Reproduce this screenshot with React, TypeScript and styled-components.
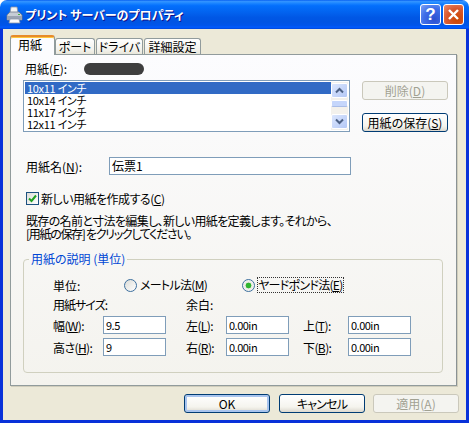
import React from "react";
import styled, { createGlobalStyle } from "styled-components";

const Global = createGlobalStyle`
  html, body { margin: 0; padding: 0; background: #fff; }
  body { font-family: "Noto Sans CJK JP", "Liberation Sans", sans-serif; font-size: 12px; color: #000; font-feature-settings: "palt"; }
  * { box-sizing: border-box; }
`;

const Win = styled.div`
  width: 469px; height: 423px; display: flex; flex-direction: column; overflow: hidden;
  border-radius: 7px 7px 0 0;
`;
const TitleBar = styled.div`
  height: 29px; flex: none; display: flex; align-items: center; padding: 0 5px 0 6px;
  background: linear-gradient(180deg, #0058ee 0%, #3593ff 4%, #288eff 8%, #127dff 14%, #036ffc 20%, #0262ee 44%, #0057e5 60%, #0054e3 76%, #0055eb 88%, #005bff 94%, #0046d8 100%);
`;
const Title = styled.div`
  color: #fff; font-weight: 700; font-size: 12px; line-height: 16px; margin-left: 2px; flex: 1;
  text-shadow: 1px 1px 0 #0f1089; white-space: pre;
`;
const CapBtn = styled.div<{ $danger?: boolean }>`
  width: 21px; height: 21px; margin-left: 2px; border: 1px solid #fff; border-radius: 3px;
  display: flex; align-items: center; justify-content: center; color: #fff;
  font: 700 17px/1 "Liberation Sans", sans-serif;
  background: ${p => p.$danger
    ? "radial-gradient(circle at 70% 75%, #cc4600 0%, #d8582f 55%, #ec8c6e 100%)"
    : "radial-gradient(circle at 70% 75%, #2b4fd0 0%, #3e6ee8 55%, #7fa3f5 100%)"};
`;
const Body = styled.div`
  flex: 1; display: flex; flex-direction: column; background: #ece9d8;
  border: solid #0831d9; border-width: 0 3px 3px;
  padding-top: 6px;
`;
const TabStrip = styled.div`
  display: flex; align-items: flex-end; height: 20px; margin: 0 0 -1px 7px; position: relative; z-index: 1;
`;
const Tab = styled.div<{ $active?: boolean; $w: number }>`
  width: ${p => p.$w}px; display: flex; align-items: center; white-space: nowrap;
  border: 1px solid #919b9c; border-radius: 3px 3px 0 0;
  ${p => p.$active ? `
    height: 20px; border-bottom: 0; border-top: 2px solid #e68b2c; background: #fcfcfe;
    padding: 0 0 3px 7px; box-shadow: inset 0 1px 0 #ffc73c;
  ` : `
    height: 16px; margin: 0 1px 1px 0; justify-content: center; border-bottom: 0;
    background: linear-gradient(180deg, #fff, #f3f2ec 70%, #e8e6da);
  `}
`;
const Panel = styled.div`
  margin-left: 7px; width: 447px; height: 332px; border: 1px solid #919b9c; border-right-color: #8a9294;
  box-shadow: 1px 1px 0 #d0cdbc;
  background: linear-gradient(180deg, #fcfcfe 0%, #f4f3ee 100%);
  padding: 7px 0 0 12px;
`;
const PaperHead = styled.div`
  display: flex; align-items: center; height: 14px; margin-bottom: 4px; padding-left: 2px; line-height: 14px;
`;
const Blob = styled.div`
  width: 60px; height: 12px; margin-left: 17px; border-radius: 6px; background: #3e3e3e; filter: blur(0.7px);
`;
const ListRow = styled.div`display: flex; align-items: flex-start; gap: 12px;`;
const List = styled.div`
  width: 327px; height: 52px; border: 1px solid #7f9db9; background: #fff; padding: 1px; display: flex;
`;
const Items = styled.div`flex: 1; padding-left: 0;`;
const Item = styled.div<{ $sel?: boolean }>`
  height: 12px; line-height: 12px; padding-left: 2px; white-space: pre; font-size: 11px; letter-spacing: -0.3px;
  ${p => p.$sel ? "background: #316ac5; color: #fff;" : ""}
`;
const Scroll = styled.div`
  width: 17px; display: flex; flex-direction: column; background: #f3f1ec; padding: 1px 0;
`;
const ScrollBtn = styled.div<{ $end?: boolean }>`
  height: 15px; margin: ${p => p.$end ? "auto 0 0" : "0"}; border: 1px solid #fff; border-radius: 2px;
  background: linear-gradient(135deg, #dbe6fd, #b4c8f6); display: flex; align-items: center; justify-content: center;
`;
const Thumb = styled.div`
  height: 7px; margin-top: 2px; border: 1px solid #fff; border-bottom-color: #a9bde8; border-radius: 2px; background: #c5d6fb;
`;
const SideButtons = styled.div`display: flex; flex-direction: column; gap: 13px; margin-top: 1px;`;
const Btn = styled.div<{ $disabled?: boolean; $focus?: boolean; $tight?: boolean }>`
  width: 86px; height: 19px; border-radius: 3px; display: flex; align-items: center; justify-content: center;
  white-space: nowrap; line-height: 14px;
  ${p => p.$tight ? "letter-spacing: -0.8px;" : ""}
  ${p => p.$disabled ? `
    border: 1px solid #cac8bb; background: #f4f4f0; color: #a1a192;
  ` : `
    border: 1px solid #003c74; background: linear-gradient(180deg, #fff 0%, #f5f4ee 70%, #dcd8ce 100%); color: #000;
  `}
  ${p => p.$focus ? "box-shadow: inset 0 0 0 2px #a8c4ee;" : ""}
`;
const NameRow = styled.div`display: flex; align-items: center; margin-top: 25px; padding-left: 3px;`;
const NameLabel = styled.div`width: 83px;`;
const Field = styled.div<{ $w: number; $num?: boolean }>`
  width: ${p => p.$w}px; height: 18px; border: 1px solid #7f9db9; background: #fff;
  padding-left: 2px; line-height: 16px; white-space: pre;
  ${p => p.$num ? "font-size: 11px; letter-spacing: -0.5px;" : ""}
`;
const CheckRow = styled.div`display: flex; align-items: center; gap: 2px; margin-top: 16px; padding-left: 3px; height: 14px;`;
const CheckText = styled.span`letter-spacing: -0.5px;`;
const CheckBox = styled.div`
  width: 13px; height: 13px; border: 1px solid #1c5180; background: linear-gradient(135deg, #dcdcd7, #fff);
  display: flex; align-items: center; justify-content: center;
`;
const Para = styled.div`margin: 9px 0 0 3px; line-height: 13px;`;
const ParaLine = styled.div<{ $sp: number }>`letter-spacing: ${p => p.$sp}px; white-space: pre;`;
const Group = styled.fieldset`
  margin: 12px 0 0; width: 420px; height: 121px; border: 1px solid #d0d0bf; border-radius: 4px;
  padding: 12px 0 0 29px; min-width: 0;
`;
const Legend = styled.legend`
  color: #0046d5; padding: 0 2px; margin-left: -24px; line-height: 14px; height: 14px;
`;
const UnitRow = styled.div`display: flex; align-items: center; height: 14px;`;
const UnitLabel = styled.div`width: 71px;`;
const RadioOption = styled.div<{ $w?: number }>`
  ${p => p.$w ? `width: ${p.$w}px;` : ""} display: flex; align-items: center; gap: 3px; white-space: nowrap;
`;
const RadioText = styled.span<{ $focus?: boolean }>`
  ${p => p.$focus ? "outline: 1px dotted #333; outline-offset: 0;" : ""} line-height: 14px; letter-spacing: -0.7px;
`;
const RadioDot = styled.div<{ $on?: boolean }>`
  width: 13px; height: 13px; border-radius: 50%; border: 1px solid #3d6f9e;
  background: ${p => p.$on ? "radial-gradient(circle, #2fb52f 0 2.6px, #e9e9e2 3.2px, #fff 100%)" : "linear-gradient(135deg, #dcdcd7, #fff)"};
`;
const SizeGrid = styled.div`
  display: grid; grid-template-columns: 50px 83px 40px 77px 45px 63px; grid-template-rows: 15px 18px 18px;
  row-gap: 4px; margin-top: 5px; align-items: center;
`;
const SpanHead = styled.div<{ $n: number; $tight?: boolean }>`
  grid-column: span ${p => p.$n};
  ${p => p.$tight ? "letter-spacing: -1px;" : ""}
`;
const FieldLabel = styled.div`letter-spacing: -0.6px;`;
const Footer = styled.div`
  display: flex; justify-content: flex-end; gap: 9px; padding: 8px 7px 0 0;
  & > :last-child { margin-left: -1px; }
`;

const Chevron = ({ up }: { up?: boolean }) => (
  <svg width="9" height="7" viewBox="0 0 9 7">
    <path d={up ? "M1 5.5 L4.5 2 L8 5.5" : "M1 1.5 L4.5 5 L8 1.5"} fill="none" stroke="#4d6185" strokeWidth="2" />
  </svg>
);

const PrinterIcon = () => (
  <svg width="17" height="18" viewBox="0 0 17 18">
    <path d="M5 1 L11 1 L12 7 L4 7 Z" fill="#f4f4f4" stroke="#8c96a8" strokeWidth=".8" />
    <path d="M1 9 L4 6 L13 6 L16 9 L16 14 L1 14 Z" fill="#c7cdd6" stroke="#6f7a8c" strokeWidth=".8" />
    <path d="M1 10 L16 10 L16 14 L1 14 Z" fill="#9aa3b2" />
    <path d="M4 13 L13 13 L14 17 L3 17 Z" fill="#fafafa" stroke="#8c96a8" strokeWidth=".8" />
    <rect x="12" y="8" width="2" height="1" fill="#4ab04a" />
  </svg>
);

export default function App() {
  return (
    <>
      <Global />
      <Win>
        <TitleBar>
          <PrinterIcon />
          <Title>プリント サーバーのプロパティ</Title>
          <CapBtn>?</CapBtn>
          <CapBtn $danger>
            <svg width="13" height="13" viewBox="0 0 13 13">
              <path d="M2 2 L11 11 M11 2 L2 11" stroke="#fff" strokeWidth="2.4" />
            </svg>
          </CapBtn>
        </TitleBar>
        <Body>
          <TabStrip>
            <Tab $active $w={45}>用紙</Tab>
            <Tab $w={40}>ポート</Tab>
            <Tab $w={47}>ドライバ</Tab>
            <Tab $w={57}>詳細設定</Tab>
          </TabStrip>
          <Panel>
            <PaperHead>
              <span>用紙(<u>F</u>):</span>
              <Blob />
            </PaperHead>
            <ListRow>
              <List>
                <Items>
                  <Item $sel>10x11 インチ</Item>
                  <Item>10x14 インチ</Item>
                  <Item>11x17 インチ</Item>
                  <Item>12x11 インチ</Item>
                </Items>
                <Scroll>
                  <ScrollBtn><Chevron up /></ScrollBtn>
                  <Thumb />
                  <ScrollBtn $end><Chevron /></ScrollBtn>
                </Scroll>
              </List>
              <SideButtons>
                <Btn $disabled>削除(<u>D</u>)</Btn>
                <Btn>用紙の保存(<u>S</u>)</Btn>
              </SideButtons>
            </ListRow>
            <NameRow>
              <NameLabel>用紙名(<u>N</u>):</NameLabel>
              <Field $w={242}>伝票1</Field>
            </NameRow>
            <CheckRow>
              <CheckBox>
                <svg width="9" height="9" viewBox="0 0 9 9">
                  <path d="M1 4.5 L3.5 7 L8 1.5" fill="none" stroke="#21a121" strokeWidth="2" />
                </svg>
              </CheckBox>
              <CheckText>新しい用紙を作成する(<u>C</u>)</CheckText>
            </CheckRow>
            <Para>
              <ParaLine $sp={-0.65}>既存の名前と寸法を編集し、新しい用紙を定義します。それから、</ParaLine>
              <ParaLine $sp={-1.3}>[用紙の保存] をクリックしてください。</ParaLine>
            </Para>
            <Group>
              <Legend>用紙の説明 (単位)</Legend>
              <UnitRow>
                <UnitLabel>単位:</UnitLabel>
                <RadioOption $w={118}>
                  <RadioDot />
                  <RadioText>メートル法(<u>M</u>)</RadioText>
                </RadioOption>
                <RadioOption>
                  <RadioDot $on />
                  <RadioText $focus>ヤードポンド法(<u>E</u>)</RadioText>
                </RadioOption>
              </UnitRow>
              <SizeGrid>
                <SpanHead $n={2} $tight>用紙サイズ:</SpanHead>
                <SpanHead $n={4}>余白:</SpanHead>
                <FieldLabel>幅(<u>W</u>):</FieldLabel>
                <Field $w={63} $num>9.5</Field>
                <FieldLabel>左(<u>L</u>):</FieldLabel>
                <Field $w={63} $num>0.00in</Field>
                <FieldLabel>上(<u>T</u>):</FieldLabel>
                <Field $w={63} $num>0.00in</Field>
                <FieldLabel>高さ(<u>H</u>):</FieldLabel>
                <Field $w={63} $num>9</Field>
                <FieldLabel>右(<u>R</u>):</FieldLabel>
                <Field $w={63} $num>0.00in</Field>
                <FieldLabel>下(<u>B</u>):</FieldLabel>
                <Field $w={63} $num>0.00in</Field>
              </SizeGrid>
            </Group>
          </Panel>
          <Footer>
            <Btn $focus>OK</Btn>
            <Btn $tight>キャンセル</Btn>
            <Btn $disabled>適用(<u>A</u>)</Btn>
          </Footer>
        </Body>
      </Win>
    </>
  );
}
